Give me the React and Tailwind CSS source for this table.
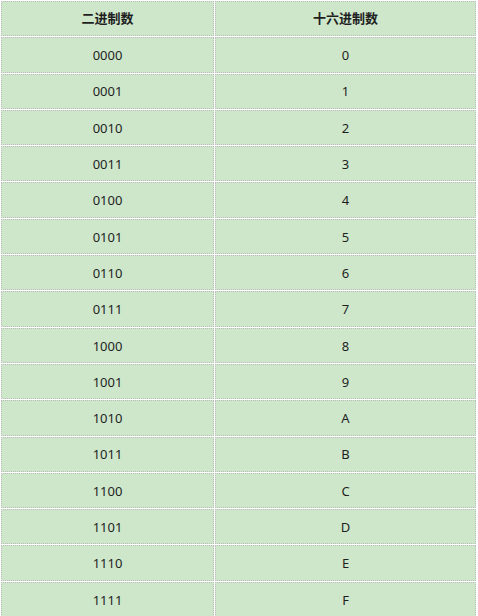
const rows = [
  ['0000', '0'],
  ['0001', '1'],
  ['0010', '2'],
  ['0011', '3'],
  ['0100', '4'],
  ['0101', '5'],
  ['0110', '6'],
  ['0111', '7'],
  ['1000', '8'],
  ['1001', '9'],
  ['1010', 'A'],
  ['1011', 'B'],
  ['1100', 'C'],
  ['1101', 'D'],
  ['1110', 'E'],
  ['1111', 'F'],
];

export default function App() {
  return (
    <div className="w-[478px] h-[616px] overflow-hidden bg-white font-['Noto_Sans','Noto_Sans_CJK_SC',sans-serif] text-[13px] text-[#1f1f1f]">
      <table className="w-[477px] border-separate border-spacing-[1px] table-fixed">
        <colgroup>
          <col className="w-[213px]" />
          <col />
        </colgroup>
        <thead>
          <tr className="h-[35.3px]">
            <th className="border border-dotted border-[#bdbdbd] bg-[#cee7cb] font-bold text-center">二进制数</th>
            <th className="border border-dotted border-[#bdbdbd] bg-[#cee7cb] font-bold text-center">十六进制数</th>
          </tr>
        </thead>
        <tbody>
          {rows.map(([bin, hex]) => (
            <tr key={bin} className="h-[35.3px]">
              <td className="border border-dotted border-[#bdbdbd] bg-[#cee7cb] pt-[2px] text-center">{bin}</td>
              <td className="border border-dotted border-[#bdbdbd] bg-[#cee7cb] pt-[2px] text-center">{hex}</td>
            </tr>
          ))}
        </tbody>
      </table>
    </div>
  );
}
